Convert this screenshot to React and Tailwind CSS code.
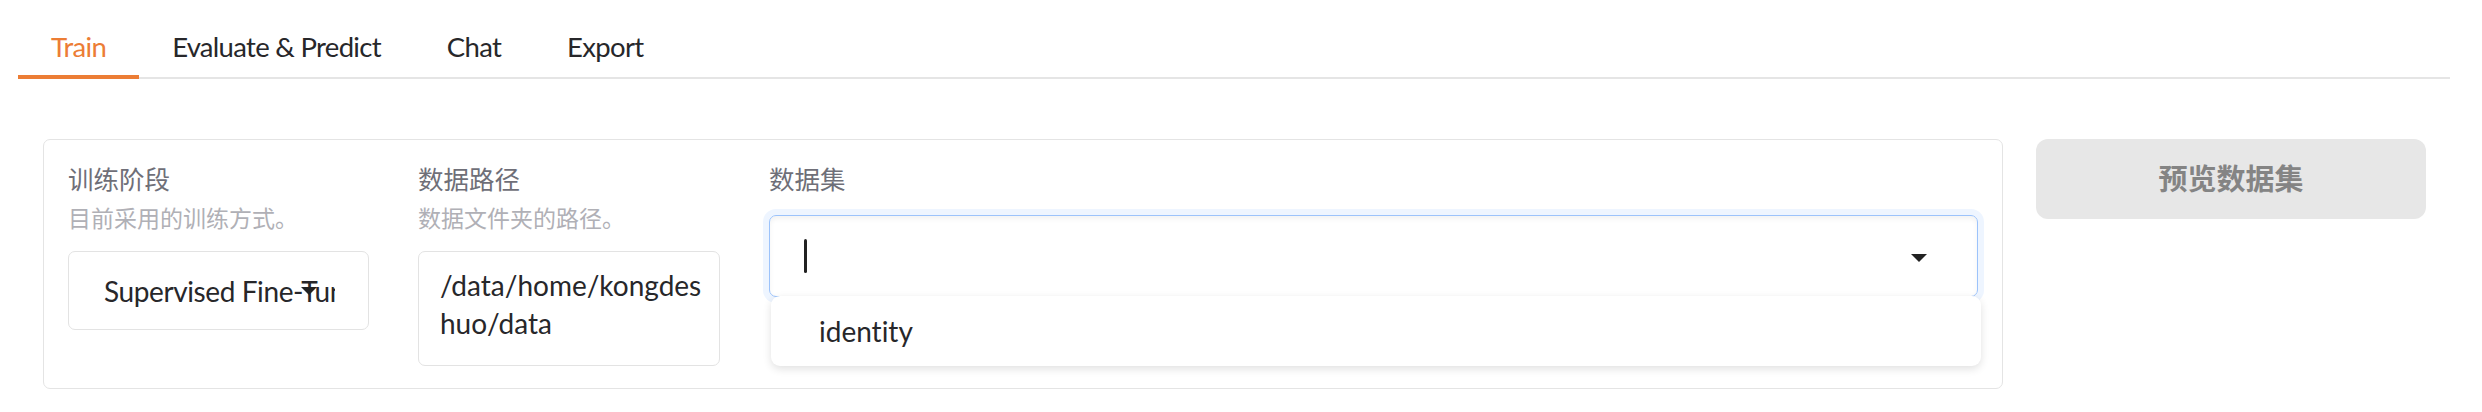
import React from 'react';

const tabs = ['Train', 'Evaluate & Predict', 'Chat', 'Export'];

const Caret = ({ className = '' }) => (
  <svg viewBox="0 0 16 8" className={`absolute w-[16px] h-[8px] ${className}`}>
    <path d="M0 0 L16 0 L8 8 Z" fill="#222" />
  </svg>
);

export default function App() {
  return (
    <div className="w-[2482px] h-[412px] bg-white font-['Lato','Noto_Sans_CJK_SC',sans-serif] text-[#27272a] [font-variant-ligatures:none]">
      {/* Tabs */}
      <div className="pl-[18px] pr-[32px] pt-[16px]">
        <div className="flex h-[63px] border-b-2 border-[#e5e5e5]">
          {tabs.map((t, i) => (
            <button
              key={t}
              className={`relative flex h-[61px] items-center px-[33px] text-[27.5px] tracking-[-0.7px] ${
                i === 0 ? 'text-[#ec7d35]' : 'text-[#27272a]'
              }`}
            >
              {t}
              {i === 0 && <span className="absolute bottom-[-2px] left-0 h-[4px] w-full bg-[#ec7d35]" />}
            </button>
          ))}
        </div>
      </div>

      {/* Content */}
      <div className="mt-[60px] flex gap-[33px] pl-[43px]">
        <div className="h-[250px] w-[1960px] rounded-[7px] border border-[#e4e4e4] px-[24px] pt-[20px]">
          <div className="flex gap-[49px]">
            {/* 训练阶段 */}
            <div className="w-[301px]">
              <div className="h-[38px] text-[25.5px] leading-[38px] text-[#6f6f78]">训练阶段</div>
              <div className="mt-[1px] h-[38px] text-[23px] leading-[38px] text-[#b0b0b6]">目前采用的训练方式。</div>
              <div className="relative mt-[14px] flex h-[79px] items-center rounded-[7px] border border-[#e3e3e3] pl-[35px] pr-[33px]">
                <span className="overflow-hidden whitespace-nowrap text-[28px] tracking-[-0.4px]">Supervised Fine-Tuning</span>
                <Caret className="right-[51px] top-[35px]" />
              </div>
            </div>

            {/* 数据路径 */}
            <div className="w-[302px]">
              <div className="h-[38px] text-[25.5px] leading-[38px] text-[#6f6f78]">数据路径</div>
              <div className="mt-[1px] h-[38px] text-[23px] leading-[38px] text-[#b0b0b6]">数据文件夹的路径。</div>
              <div className="mt-[14px] h-[115px] rounded-[7px] border border-[#e3e3e3] pl-[21px] pt-[15px] text-[28px] leading-[37.5px]">
                <div>/data/home/kongdes</div>
                <div>huo/data</div>
              </div>
            </div>

            {/* 数据集 */}
            <div className="flex-1">
              <div className="h-[38px] text-[25.5px] leading-[38px] text-[#6f6f78]">数据集</div>
              <div className="relative mt-[17px]">
                <div className="flex h-[82px] items-center rounded-[7px] border border-[#9cc3fb] pl-[34px] shadow-[0_0_0_6px_#eef5ff,inset_0_3px_5px_rgba(0,0,0,0.05)]">
                  <span className="h-[34px] w-[3px] rounded-full bg-[#222]" />
                  <Caret className="right-[51px] top-[39px]" />
                </div>
                <div className="absolute left-[2px] right-[-3px] top-[81px] flex h-[70px] items-center rounded-[9px] bg-white pl-[48px] text-[28px] shadow-[0_3px_8px_rgba(0,0,0,0.12)]">
                  identity
                </div>
              </div>
            </div>
          </div>
        </div>

        <button className="h-[80px] w-[390px] rounded-[12px] bg-[#e7e7e7] text-[29px] font-bold text-[#848484]">
          预览数据集
        </button>
      </div>
    </div>
  );
}
